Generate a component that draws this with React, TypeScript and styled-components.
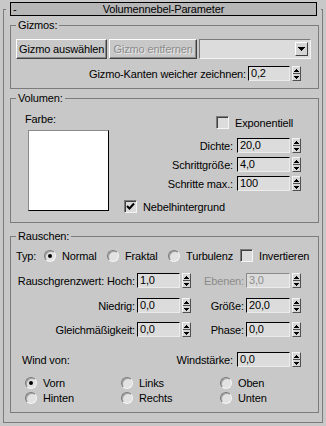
import React from "react";
import styled, { createGlobalStyle } from "styled-components";

const GlobalStyle = createGlobalStyle`
  html, body {
    margin: 0;
    padding: 0;
    background: #c8c8c8;
  }
  body {
    font-family: "Liberation Sans", Arial, sans-serif;
    font-size: 11px;
    letter-spacing: -0.15px;
    color: #000;
  }
`;

const Panel = styled.div`
  width: 326px;
  height: 426px;
  padding-top: 2px;
  box-sizing: border-box;
`;

const Rollout = styled.fieldset`
  box-sizing: border-box;
  width: 320px;
  min-inline-size: 0;
  margin: 0 0 0 3px;
  padding: 0 3px 9px 2px;
  border: 1px solid #7c7c7c;
`;

const RolloutLegend = styled.legend`
  padding: 0 4px;
`;

const TitleBar = styled.div`
  box-sizing: border-box;
  width: 307px;
  height: 14px;
  border: 1px solid #000;
  background: #b6b6b6;
  display: grid;
  grid-template-columns: 14px 1fr 14px;
  align-items: center;
  line-height: 12px;
`;

const Minus = styled.span`
  padding-left: 2px;
`;

const Title = styled.span`
  text-align: center;
`;

const Group = styled.fieldset<{ $top: number; $pt: number; $pb: number }>`
  min-inline-size: 0;
  margin: ${p => p.$top}px 0 0 4px;
  padding: ${p => p.$pt}px 7px ${p => p.$pb}px 5px;
  border: 1px solid #7c7c7c;
`;

const GroupLegend = styled.legend`
  padding: 0 2px;
  line-height: 14px;
`;

const Row = styled.div<{ $mt?: number; $pr?: number; $justify?: string }>`
  display: flex;
  align-items: center;
  justify-content: ${p => p.$justify || "flex-start"};
  margin-top: ${p => p.$mt || 0}px;
  padding-right: ${p => p.$pr || 0}px;
  height: 15px;
`;

const ButtonRow = styled.div`
  display: flex;
  gap: 2px;
  height: 20px;
`;

const Button = styled.button<{ $w: number }>`
  box-sizing: border-box;
  width: ${p => p.$w}px;
  height: 20px;
  padding: 0;
  font: inherit;
  letter-spacing: inherit;
  color: #000;
  background: #c8c8c8;
  border: 1px solid;
  border-color: #ffffff #404040 #404040 #ffffff;
  box-shadow: inset -1px -1px 0 #8a8a8a;

  &:disabled {
    color: #8c8c8c;
    text-shadow: 1px 1px 0 #e8e8e8;
  }
`;

const Dropdown = styled.div`
  box-sizing: border-box;
  width: 113px;
  height: 20px;
  border: 1px solid;
  border-color: #7a7a7a #f4f4f4 #f4f4f4 #7a7a7a;
  background: #dcdcdc;
  display: flex;
  justify-content: flex-end;
  align-items: center;
  padding-right: 2px;
`;

const DropButton = styled.div`
  box-sizing: border-box;
  width: 13px;
  height: 14px;
  background: #d4d4d4;
  border: 1px solid;
  border-color: #ffffff #404040 #404040 #ffffff;
  display: flex;
  align-items: center;
  justify-content: center;
`;

const SpinWrap = styled.div<{ $w?: number }>`
  display: flex;
  align-items: center;
  width: ${p => (p.$w ? `${p.$w}px` : "auto")};
`;

const SpinLabel = styled.span<{ $gap: number; $disabled?: boolean }>`
  flex: 1;
  text-align: right;
  white-space: nowrap;
  margin-right: ${p => p.$gap}px;
  color: ${p => (p.$disabled ? "#8c8c8c" : "#000")};
`;

const Field = styled.div<{ $w: number; $disabled?: boolean }>`
  box-sizing: border-box;
  width: ${p => p.$w}px;
  height: 15px;
  padding-left: 2px;
  line-height: 13px;
  background: #dcdcdc;
  border: 1px solid;
  border-color: ${p =>
    p.$disabled ? "#8a8a8a #ececec #ececec #8a8a8a" : "#000 #ececec #ececec #000"};
  color: ${p => (p.$disabled ? "#8c8c8c" : "#000")};
`;

const Spin = styled.div`
  box-sizing: border-box;
  width: 9px;
  height: 15px;
  margin-left: 2px;
  display: flex;
  flex-direction: column;
  border: 1px solid;
  border-color: #f4f4f4 #505050 #505050 #f4f4f4;
  background: #d6d6d6;
`;

const SpinHalf = styled.div<{ $top?: boolean }>`
  flex: 1;
  display: flex;
  align-items: center;
  justify-content: center;
  border-bottom: ${p => (p.$top ? "1px solid #505050" : "none")};
`;

const VolumeGrid = styled.div`
  display: grid;
  grid-template-columns: 108px 1fr;
`;

const Column = styled.div`
  display: flex;
  flex-direction: column;
`;

const Caption = styled.span<{ $ml?: number }>`
  line-height: 14px;
  margin-left: ${p => p.$ml || 0}px;
`;

const Swatch = styled.div`
  box-sizing: border-box;
  width: 81px;
  height: 81px;
  margin: 4px 0 0 12px;
  background: #fff;
  border: 1px solid;
  border-color: #8a8a8a #000 #000 #8a8a8a;
`;

const Option = styled.label<{ $w?: number; $ml?: number }>`
  display: flex;
  align-items: center;
  gap: 6px;
  height: 14px;
  width: ${p => (p.$w ? `${p.$w}px` : "auto")};
  margin-left: ${p => p.$ml || 0}px;
  white-space: nowrap;
`;

const CheckBox = styled.span`
  box-sizing: border-box;
  width: 13px;
  height: 13px;
  flex: none;
  border: 1px solid;
  border-color: #7a7a7a #f4f4f4 #f4f4f4 #7a7a7a;
  box-shadow: inset 1px 1px 0 #404040;
  background: #dcdcdc;
  display: flex;
  align-items: center;
  justify-content: center;
`;

const RadioDot = styled.span<{ $on?: boolean }>`
  box-sizing: border-box;
  width: 12px;
  height: 12px;
  flex: none;
  border-radius: 50%;
  border: 1px solid;
  border-color: #7a7a7a #f4f4f4 #f4f4f4 #7a7a7a;
  box-shadow: inset 1px 1px 0 #a0a0a0;
  background: #e2e2e2;
  display: flex;
  align-items: center;
  justify-content: center;

  &::after {
    content: "";
    width: 4px;
    height: 4px;
    border-radius: 50%;
    background: ${p => (p.$on ? "#000" : "transparent")};
  }
`;

const TypLabel = styled.span`
  width: 28px;
`;

const WindGrid = styled.div`
  display: grid;
  grid-template-columns: 96px 99px auto;
  grid-auto-rows: 15px;
  margin: 8px 0 0 9px;
  align-items: center;
`;

const Arrow = ({ down }: { down?: boolean }) => (
  <svg width="5" height="3" viewBox="0 0 5 3">
    <path
      d={down ? "M0 0h5v1H0z M1 1h3v1H1z M2 2h1v1H2z" : "M2 0h1v1H2z M1 1h3v1H1z M0 2h5v1H0z"}
      fill="#000"
    />
  </svg>
);

const Check = () => (
  <svg width="9" height="9" viewBox="0 0 9 9">
    <path d="M1 4 L3.5 6.5 L8 1.5" stroke="#000" strokeWidth="2" fill="none" />
  </svg>
);

function Spinner({
  label,
  value,
  width,
  field,
  gap,
  disabled,
}: {
  label: string;
  value: string;
  width?: number;
  field: number;
  gap: number;
  disabled?: boolean;
}) {
  return (
    <SpinWrap $w={width}>
      <SpinLabel $gap={gap} $disabled={disabled}>
        {label}
      </SpinLabel>
      <Field $w={field} $disabled={disabled}>
        {value}
      </Field>
      <Spin>
        <SpinHalf $top>
          <Arrow />
        </SpinHalf>
        <SpinHalf>
          <Arrow down />
        </SpinHalf>
      </Spin>
    </SpinWrap>
  );
}

function Radio({ label, on, w, ml }: { label: string; on?: boolean; w?: number; ml?: number }) {
  return (
    <Option $w={w} $ml={ml}>
      <RadioDot $on={on} />
      {label}
    </Option>
  );
}

function Checkbox({ label, on, ml }: { label: string; on?: boolean; ml?: number }) {
  return (
    <Option $ml={ml}>
      <CheckBox>{on && <Check />}</CheckBox>
      {label}
    </Option>
  );
}

export default function App() {
  return (
    <Panel>
      <GlobalStyle />
      <Rollout>
        <RolloutLegend>
          <TitleBar>
            <Minus>-</Minus>
            <Title>Volumennebel-Parameter</Title>
          </TitleBar>
        </RolloutLegend>

        <Group $top={2} $pt={7} $pb={7}>
          <GroupLegend>Gizmos:</GroupLegend>
          <ButtonRow>
            <Button $w={92}>Gizmo auswählen</Button>
            <Button $w={88} disabled>
              Gizmo entfernen
            </Button>
            <Dropdown>
              <DropButton>
                <svg width="7" height="4" viewBox="0 0 7 4">
                  <path d="M0 0h7v1H0z M1 1h5v1H1z M2 2h3v1H2z M3 3h1v1H3z" fill="#000" />
                </svg>
              </DropButton>
            </Dropdown>
          </ButtonRow>
          <Row $mt={7} $pr={10} $justify="flex-end">
            <Spinner label="Gizmo-Kanten weicher zeichnen:" value="0,2" field={42} gap={2} />
          </Row>
        </Group>

        <Group $top={2} $pt={7} $pb={8}>
          <GroupLegend>Volumen:</GroupLegend>
          <VolumeGrid>
            <Column>
              <Caption $ml={9}>Farbe:</Caption>
              <Swatch />
            </Column>
            <Column>
              <Row $mt={3}>
                <Checkbox label="Exponentiell" ml={92} />
              </Row>
              <Row $mt={8} $pr={10} $justify="flex-end">
                <Spinner label="Dichte:" value="20,0" field={53} gap={4} />
              </Row>
              <Row $mt={4} $pr={10} $justify="flex-end">
                <Spinner label="Schrittgröße:" value="4,0" field={53} gap={4} />
              </Row>
              <Row $mt={4} $pr={10} $justify="flex-end">
                <Spinner label="Schritte max.:" value="100" field={53} gap={4} />
              </Row>
              <Row $mt={8}>
                <Checkbox label="Nebelhintergrund" on />
              </Row>
            </Column>
          </VolumeGrid>
        </Group>

        <Group $top={6} $pt={5} $pb={7}>
          <GroupLegend>Rauschen:</GroupLegend>
          <Row>
            <TypLabel>Typ:</TypLabel>
            <Radio label="Normal" on w={63} />
            <Radio label="Fraktal" w={61} />
            <Radio label="Turbulenz" w={72} />
            <Checkbox label="Invertieren" />
          </Row>
          <Row $mt={10}>
            <Spinner label="Rauschgrenzwert: Hoch:" value="1,0" width={175} field={43} gap={2} />
            <Spinner label="Ebenen:" value="3,0" width={110} field={44} gap={2} disabled />
          </Row>
          <Row $mt={10}>
            <Spinner label="Niedrig:" value="0,0" width={175} field={43} gap={2} />
            <Spinner label="Größe:" value="20,0" width={110} field={44} gap={2} />
          </Row>
          <Row $mt={9}>
            <Spinner label="Gleichmäßigkeit:" value="0,0" width={175} field={43} gap={2} />
            <Spinner label="Phase:" value="0,0" width={110} field={44} gap={2} />
          </Row>
          <Row $mt={15} $pr={10} $justify="space-between">
            <Caption $ml={6}>Wind von:</Caption>
            <Spinner label="Windstärke:" value="0,0" field={53} gap={4} />
          </Row>
          <WindGrid>
            <Radio label="Vorn" on />
            <Radio label="Links" />
            <Radio label="Oben" />
            <Radio label="Hinten" />
            <Radio label="Rechts" />
            <Radio label="Unten" />
          </WindGrid>
        </Group>
      </Rollout>
    </Panel>
  );
}
